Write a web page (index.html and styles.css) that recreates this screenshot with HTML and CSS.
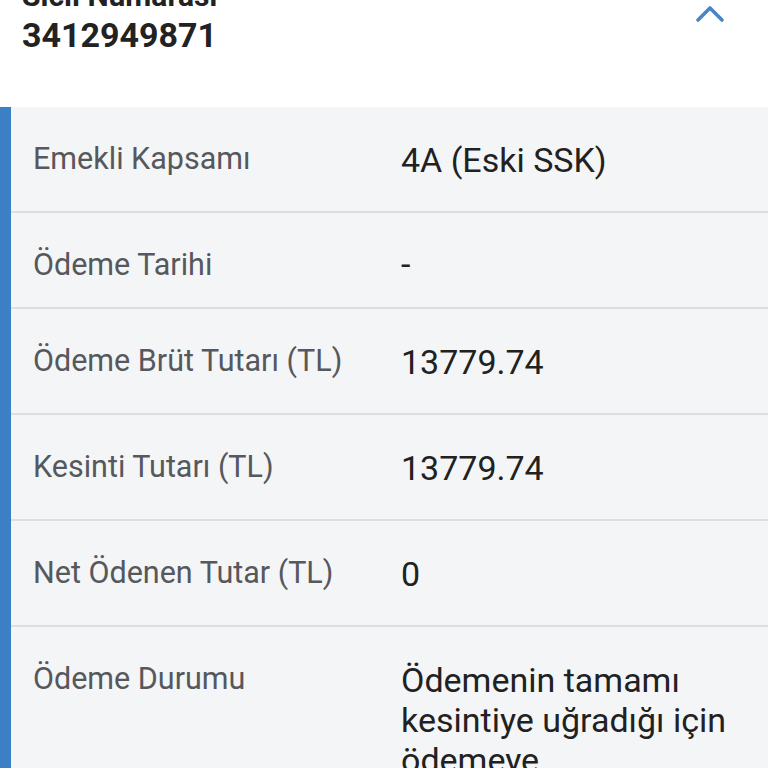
FILE: index.html
```html
<!DOCTYPE html>
<html lang="tr">
<head>
<meta charset="utf-8">
<title>Sicil</title>
<link rel="stylesheet" href="styles.css">
</head>
<body>
<header class="head">
  <div class="head-text">
    <div class="head-label">Sicil Numarası</div>
    <div class="head-number">3412949871</div>
  </div>
  <svg class="chevron" width="30" height="18" viewBox="0 0 30 18" aria-hidden="true">
    <path d="M3 15 L15 3 L27 15" fill="none" stroke="#4a84c5" stroke-width="3.6" stroke-linecap="round" stroke-linejoin="round"/>
  </svg>
</header>
<section class="details">
  <div class="row">
    <div class="label">Emekli Kapsamı</div>
    <div class="value">4A (Eski SSK)</div>
  </div>
  <div class="row">
    <div class="label">Ödeme Tarihi</div>
    <div class="value value-empty">-</div>
  </div>
  <div class="row">
    <div class="label">Ödeme Brüt Tutarı (TL)</div>
    <div class="value">13779.74</div>
  </div>
  <div class="row">
    <div class="label">Kesinti Tutarı (TL)</div>
    <div class="value">13779.74</div>
  </div>
  <div class="row">
    <div class="label">Net Ödenen Tutar (TL)</div>
    <div class="value">0</div>
  </div>
  <div class="row">
    <div class="label">Ödeme Durumu</div>
    <div class="value">Ödemenin tamamı kesintiye uğradığı için ödemeye</div>
  </div>
</section>
</body>
</html>
```
FILE: styles.css
```css
html, body {
  margin: 0;
  padding: 0;
}
body {
  font-family: Roboto, "Noto Sans", "Liberation Sans", sans-serif;
  background: #ffffff;
  width: 768px;
  height: 768px;
  overflow: hidden;
}
.head {
  display: flex;
  justify-content: space-between;
  align-items: flex-start;
  height: 107px;
  background: #ffffff;
  padding: 0 43px 0 22px;
  box-sizing: border-box;
}
.head-text {
  margin-top: -21px;
  color: #222222;
  font-weight: 700;
}
.head-label {
  font-size: 30px;
  line-height: 34px;
}
.head-number {
  font-size: 34px;
  line-height: 40px;
  margin-top: 2px;
}
.chevron {
  margin-top: 5px;
}
.details {
  background: #f4f5f7;
  border-left: 11px solid #3b7fc4;
  min-height: 700px;
}
.row {
  display: grid;
  grid-template-columns: 368px 1fr;
  align-items: start;
  padding: 33px 22px 24px 22px;
  border-bottom: 2px solid #dcdee1;
}
.label {
  font-size: 30.5px;
  line-height: 37px;
  color: #56585c;
}
.value {
  font-size: 34px;
  line-height: 40px;
  color: #212121;
  margin-bottom: 7px;
}
.value-empty {
  line-height: 37px;
  margin-bottom: 0;
}
```
